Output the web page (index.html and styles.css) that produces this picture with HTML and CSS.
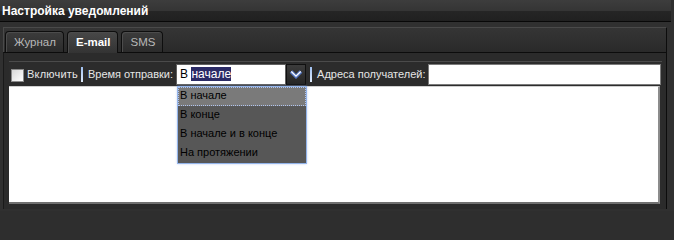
FILE: index.html
```html
<!DOCTYPE html>
<html>
<head>
<meta charset="utf-8">
<link rel="stylesheet" href="styles.css">
</head>
<body>
<div class="window">
  <div class="title">Настройка уведомлений</div>
  <div class="frame">
    <div class="tabstrip">
      <div class="tab">Журнал</div>
      <div class="tab active">E-mail</div>
      <div class="tab">SMS</div>
    </div>
    <div class="panel">
      <div class="inner">
        <div class="toolbar">
          <label class="check"><span class="box"></span>Включить</label>
          <span class="sep"></span>
          <span class="lbl">Время отправки:</span>
          <div class="combo">
            <div class="combo-input">В <span class="sel">начале</span></div>
            <div class="combo-btn">
              <svg width="14" height="10" viewBox="0 0 14 10"><polyline points="2,2.5 7,7.5 12,2.5" fill="none" stroke="#5577c4" stroke-width="3.6" stroke-linejoin="miter"/><polyline points="2.3,2.5 7,7.2 11.7,2.5" fill="none" stroke="#ffffff" stroke-width="1.2"/></svg>
            </div>
          </div>
          <span class="sep sep2"></span>
          <span class="lbl">Адреса получателей:</span>
          <div class="addr"></div>
        </div>
        <div class="textarea"></div>
      </div>
    </div>
  </div>
  <div class="dropdown">
    <div class="item hl">В начале</div>
    <div class="item">В конце</div>
    <div class="item">В начале и в конце</div>
    <div class="item">На протяжении</div>
  </div>
</div>
</body>
</html>
```
FILE: styles.css
```css
html, body {
  margin: 0;
  padding: 0;
  background: #2e2e2e;
}
.window {
  position: relative;
  width: 674px;
  height: 211px;
  background: #2f2f2f;
  font-family: "Liberation Sans", Arial, sans-serif;
  font-size: 11px;
  overflow: hidden;
  white-space: nowrap;
}
.title {
  box-sizing: border-box;
  padding: 4px 0 0 2px;
  width: 671px;
  height: 22px;
  background: linear-gradient(#3d3d3d 0, #353535 50%, #252525 52%, #202020 100%);
  color: #ffffff;
  font-weight: bold;
  font-size: 12px;
  border-bottom: 1px solid #080808;
}
.frame {
  padding: 5px 7px 0 3px;
  background: #303030;
  height: 189px;
  box-sizing: border-box;
}
.tabstrip {
  display: flex;
  align-items: flex-end;
  gap: 3px;
  height: 25px;
  box-sizing: border-box;
  padding: 0 0 0 1px;
  border-top: 1px solid #4a4a4a;
  border-left: 1px solid #4a4a4a;
  border-right: 1px solid #0c0c0c;
  background: linear-gradient(#353535, #2a2a2a);
}
.tab {
  height: 21px;
  box-sizing: border-box;
  padding: 4px 7px 0 8px;
  border: 1px solid #0e0e0e;
  border-bottom: none;
  border-radius: 4px 4px 0 0;
  background: linear-gradient(#3c3c3c, #2b2b2b);
  color: #b8b8b8;
  font-size: 11.5px;
  box-shadow: inset 1px 1px 0 #4c4c4c;
}
.tab.active {
  height: 22px;
  margin-bottom: -1px;
  background: linear-gradient(#484848, #333333);
  color: #ffffff;
  font-weight: bold;
  position: relative;
}
.panel {
  border-top: 1px solid #0c0c0c;
  border-left: 1px solid #1a1a1a;
  border-right: 1px solid #0c0c0c;
  background: #2b2b2b;
  padding: 8px 4px 0 5px;
  height: 157px;
  box-sizing: border-box;
}
.inner {
  border-top: 1px solid #4b4b4b;
  background: #2c2c2c;
}
.toolbar {
  display: flex;
  align-items: center;
  height: 24px;
  padding-left: 2px;
  color: #e6e6e6;
  font-size: 11px;
}
.toolbar > * {
  flex-shrink: 0;
}
.check {
  display: flex;
  align-items: center;
  gap: 3px;
  letter-spacing: 0.2px;
}
.box {
  width: 11px;
  height: 11px;
  border: 1px solid #8a8a8a;
  background: linear-gradient(135deg, #d8d8d8, #ffffff);
  margin-top: 2px;
}
.sep {
  width: 2px;
  height: 15px;
  margin: 0 5px 0 3px;
  background: linear-gradient(#9fc0f0, #e0ecfc);
}
.sep2 {
  margin-left: 4px;
}
.lbl {
  margin-right: 3px;
}
.combo {
  display: flex;
  height: 21px;
  width: 130px;
}
.combo-input {
  flex: 1;
  background: #ffffff;
  border: 1px solid #606060;
  color: #000;
  padding: 2px 0 0 3px;
  box-sizing: border-box;
  font-size: 12px;
  line-height: 15px;
}
.sel {
  background: #2b2b66;
  color: #ffffff;
}
.combo-btn {
  width: 20px;
  box-sizing: border-box;
  border: 1px solid #101010;
  background: linear-gradient(#3c3c3c, #262626);
  display: flex;
  align-items: center;
  justify-content: center;
}
.addr {
  flex: 1 1 auto !important;
  height: 19px;
  background: #ffffff;
  border: 1px solid #7a7a7a;
  margin-left: -1px;
  margin-right: 1px;
}
.textarea {
  height: 115px;
  width: 649px;
  background: #ffffff;
  border-right: 2px solid #8c8c8c;
  border-bottom: 2px solid #707070;
  border-top: 1px solid #d0d0d0;
}
.dropdown {
  position: absolute;
  left: 177px;
  top: 86px;
  width: 128px;
  background: #575757;
  border: 1px solid #92b4ea;
  box-shadow: 0 0 2px rgba(170, 190, 240, 0.7);
}
.item {
  height: 19px;
  box-sizing: border-box;
  padding: 2px 0 0 2px;
  color: #000;
  font-size: 11px;
}
.item.hl {
  background: #7a7a7a;
  border: 1px dotted #b0c4f0;
  padding: 1px 0 0 1px;
}
```
